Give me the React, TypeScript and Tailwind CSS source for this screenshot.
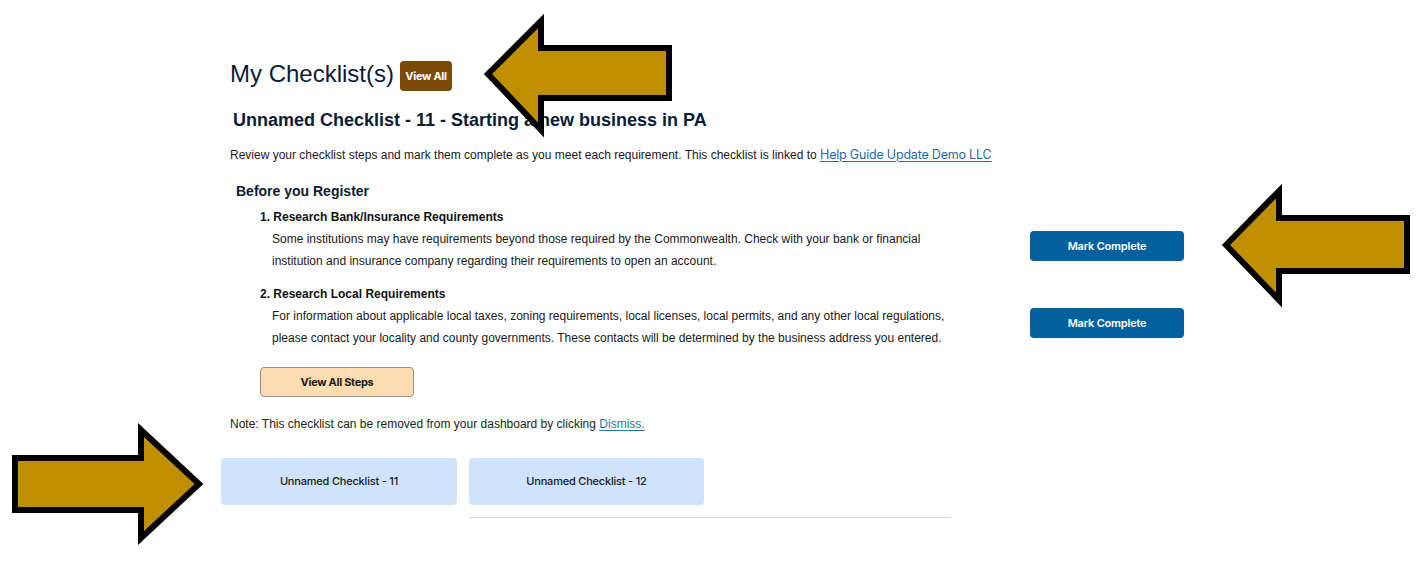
import React from 'react';

type Step = { title: string; text: string };

const steps: Step[] = [
  {
    title: '1. Research Bank/Insurance Requirements',
    text: 'Some institutions may have requirements beyond those required by the Commonwealth. Check with your bank or financial institution and insurance company regarding their requirements to open an account.',
  },
  {
    title: '2. Research Local Requirements',
    text: 'For information about applicable local taxes, zoning requirements, local licenses, local permits, and any other local regulations, please contact your locality and county governments. These contacts will be determined by the business address you entered.',
  },
];

// callout arrows drawn over the page
const Arrows: React.FC = () => (
  <svg
    className="absolute inset-0 pointer-events-none"
    width="1423"
    height="561"
    viewBox="0 0 1423 561"
  >
    <g fill="#bf8f00" stroke="#000" strokeWidth="6" strokeLinejoin="miter">
      <polygon points="488,74 541,21 541,48 669,48 669,98 541,98 541,130" />
      <polygon points="1226,245 1279,191 1279,218 1407,218 1407,271 1279,271 1279,300" />
      <polygon points="15,458 141,458 141,430 199,484 141,538 141,510 15,510" />
    </g>
  </svg>
);

const App: React.FC = () => {
  return (
    <div className="relative w-full h-[561px] overflow-hidden bg-white font-['Liberation_Sans',Arial,sans-serif] text-[#1a1a1a]">
      <div className="pl-[230px] pt-[61px]">
        <div className="flex items-center gap-[6px]">
          <h1 className="text-[24px] leading-[28px] text-[#0d1b34] -mt-[5px]">My Checklist(s)</h1>
          <button className="h-[30px] w-[52px] rounded-[4px] bg-[#7a4b07] text-white text-[11px] font-bold font-['Inter',sans-serif] tracking-[-0.3px]">
            View All
          </button>
        </div>

        <h2 className="mt-[18px] ml-[3px] text-[18px] leading-[22px] font-bold text-[#0d1b34]">
          Unnamed Checklist - 11 - Starting a new business in PA
        </h2>

        <p className="mt-[16px] text-[12px] leading-[16px]">
          Review your checklist steps and mark them complete as you meet each requirement. This checklist is linked to{' '}
          <a className="font-['Inter',sans-serif] text-[12.5px] text-[#1f6aa5] underline underline-offset-2 tracking-[-0.2px] cursor-pointer">
            Help Guide Update Demo LLC
          </a>
        </p>

        <h3 className="mt-[19px] ml-[6px] text-[14px] leading-[18px] font-bold text-[#0d1b34]">Before you Register</h3>

        <div className="mt-[9px] ml-[30px] flex flex-col gap-[14px]">
          {steps.map((s) => (
            <div key={s.title} className="flex">
              <div className="w-[700px]">
                <div className="text-[12px] leading-[16px] font-bold text-[#111]">{s.title}</div>
                <p className="mt-[3px] pl-[12px] text-[12px] leading-[22px]">{s.text}</p>
              </div>
              <div className="ml-[70px] mt-[22px]">
                <button className="h-[30px] w-[154px] rounded-[4px] bg-[#02609f] text-white text-[11px] font-semibold font-['Inter',sans-serif] tracking-[-0.2px]">
                  Mark Complete
                </button>
              </div>
            </div>
          ))}
        </div>

        <button className="mt-[18px] ml-[30px] h-[30px] w-[154px] rounded-[4px] border border-[#9b9088] bg-[#fddcb1] text-[11px] font-bold font-['Inter',sans-serif] text-[#1a1a1a] tracking-[-0.3px]">
          View All Steps
        </button>

        <p className="mt-[19px] text-[12px] leading-[16px] text-[#222]">
          Note: This checklist can be removed from your dashboard by clicking{' '}
          <a className="text-[#2a74ad] underline underline-offset-2 cursor-pointer">Dismiss.</a>
        </p>

        <div className="mt-[26px] -ml-[9px] flex gap-[12px]">
          <div className="h-[47px] w-[236px] rounded-[4px] bg-[#cfe3fc] flex items-center justify-center text-[11px] font-medium font-['Inter',sans-serif] text-[#1a1a1a] tracking-[-0.2px]">
            Unnamed Checklist - 11
          </div>
          <div className="h-[47px] w-[235px] rounded-[4px] bg-[#cfe3fc] flex items-center justify-center text-[11px] font-medium font-['Inter',sans-serif] text-[#1a1a1a] tracking-[-0.2px]">
            Unnamed Checklist - 12
          </div>
        </div>
        <div className="mt-[12px] ml-[240px] w-[480px] h-px bg-[#d4d4d8]" />
      </div>
      <Arrows />
    </div>
  );
};

export default App;
